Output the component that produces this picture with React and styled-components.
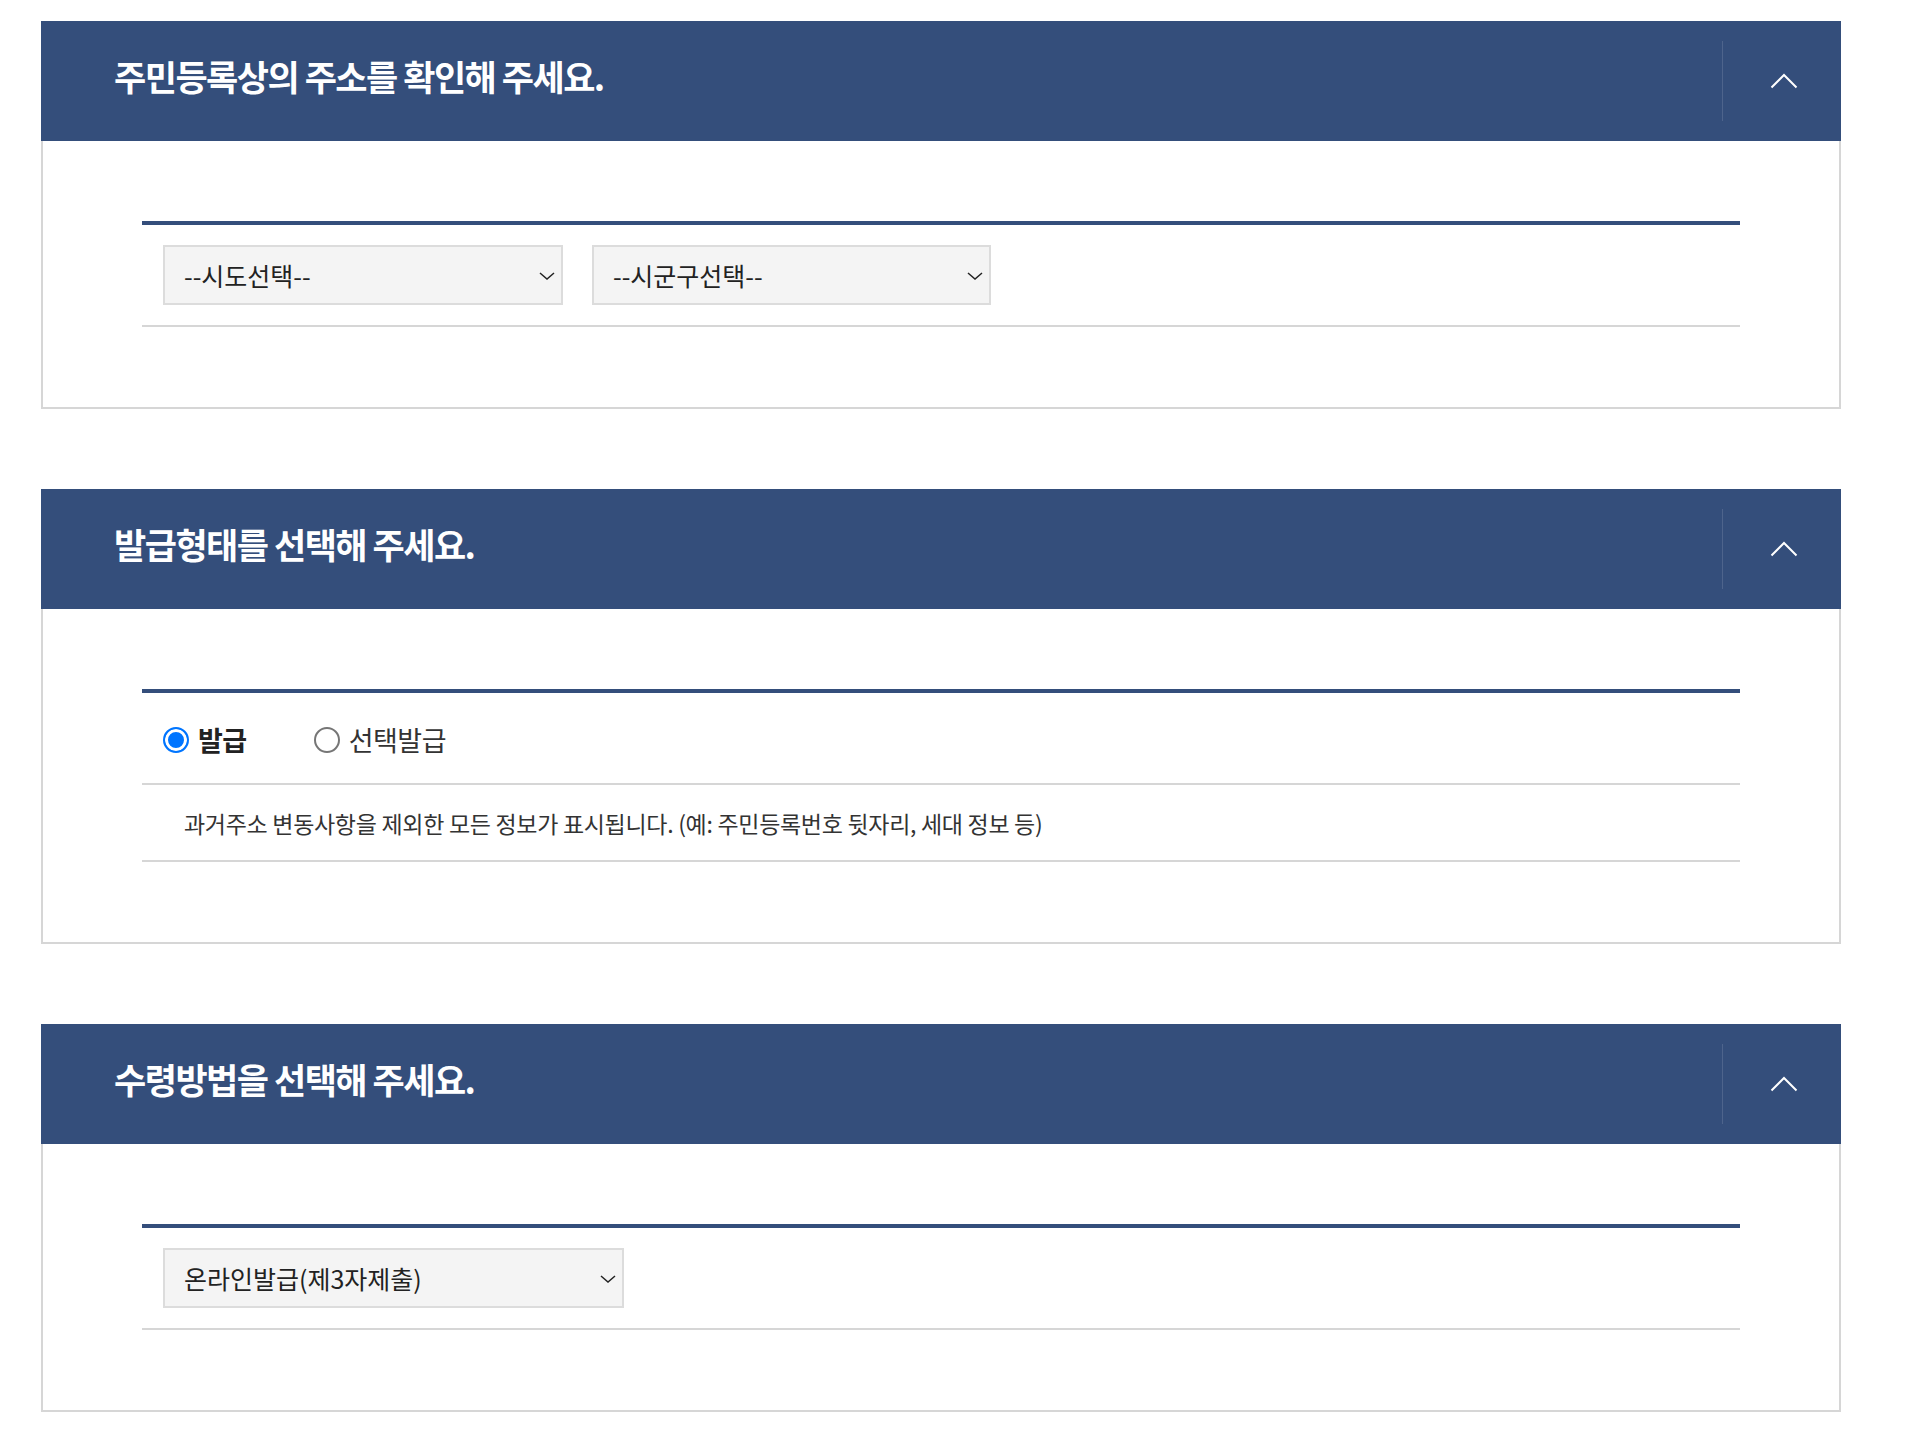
import React, { useState } from 'react';
import styled, { createGlobalStyle } from 'styled-components';

const GlobalStyle = createGlobalStyle`
  * { box-sizing: border-box; }
  body {
    margin: 0;
    background: #fff;
    font-family: "Noto Sans CJK KR", "Noto Sans", sans-serif;
    color: #222;
  }
`;

const Page = styled.div`
  width: 1841px;
  padding: 21px 0 38px 41px;
`;

const Panel = styled.section`
  width: 1800px;
  margin-bottom: 80px;
  &:last-child { margin-bottom: 0; }
`;

const Header = styled.div`
  height: 120px;
  background: #344e7b;
  display: flex;
  align-items: center;
  padding-left: 73px;
`;

const Title = styled.h2`
  flex: 1;
  margin: 0 0 12px;
  color: #fff;
  font-size: 35px;
  font-weight: 700;
  letter-spacing: -1.5px;
`;

const Toggle = styled.button`
  width: 119px;
  height: 80px;
  border: 0;
  border-left: 1px solid rgba(255, 255, 255, 0.13);
  background: transparent;
  display: flex;
  align-items: center;
  justify-content: center;
  padding: 0 0 0 4px;
  cursor: pointer;
`;

const Body = styled.div`
  border: 2px solid #d6d6d6;
  border-top: 0;
  padding: 80px 99px 80px;
`;

const Table = styled.div`
  border-top: 4px solid #344e7b;
`;

const Row = styled.div`
  display: flex;
  align-items: center;
  gap: 29px;
  padding: ${p => p.$pad || '20px 21px'};
  min-height: ${p => p.$h || 'auto'};
  border-bottom: 2px solid #d6d6d6;
`;

const SelectWrap = styled.div`
  position: relative;
  width: ${p => p.$w}px;
`;

const Select = styled.select`
  appearance: none;
  width: 100%;
  height: 60px;
  background: #f4f4f4;
  border: 2px solid #dcdcdc;
  border-radius: 0;
  padding: 0 40px 0 19px;
  font-family: "Noto Sans CJK KR", "Noto Sans", sans-serif;
  font-size: 25px;
  color: #222;
  outline: none;
`;

const Arrow = styled.svg`
  position: absolute;
  right: 8px;
  top: 27px;
  pointer-events: none;
`;

const RadioLabel = styled.label`
  display: flex;
  align-items: center;
  gap: 9px;
  font-size: 27px;
  letter-spacing: -0.5px;
  font-weight: ${p => (p.$on ? 700 : 400)};
  color: ${p => (p.$on ? '#222' : '#333')};
  margin-right: ${p => p.$mr || 0}px;
  cursor: pointer;
`;

const Radio = styled.input`
  appearance: none;
  margin: 0;
  width: 26px;
  height: 26px;
  border-radius: 50%;
  border: 2px solid #767676;
  background: #fff;
  &:checked {
    border: 2px solid #0075ff;
    background: #0075ff;
    box-shadow: inset 0 0 0 3px #fff;
  }
`;

const Desc = styled.p`
  margin: 0;
  font-size: 23px;
  letter-spacing: -0.3px;
  color: #333;
`;

const Chevron = () => (
  <svg width="28" height="16" viewBox="0 0 28 16">
    <polyline points="1.5,14.5 14,2 26.5,14.5" fill="none" stroke="#fff" strokeWidth="2" />
  </svg>
);

const Dropdown = ({ w, children }) => (
  <SelectWrap $w={w}>
    <Select>{children}</Select>
    <Arrow width="16" height="8" viewBox="0 0 16 8">
      <polyline points="1,1 8,7 15,1" fill="none" stroke="#222" strokeWidth="1.5" />
    </Arrow>
  </SelectWrap>
);

const Section = ({ title, children }) => (
  <Panel>
    <Header>
      <Title>{title}</Title>
      <Toggle aria-label="접기"><Chevron /></Toggle>
    </Header>
    <Body>
      <Table>{children}</Table>
    </Body>
  </Panel>
);

export default function App() {
  const [type, setType] = useState('all');
  return (
    <Page>
      <GlobalStyle />
      <Section title="주민등록상의 주소를 확인해 주세요.">
        <Row>
          <Dropdown w={400}><option>--시도선택--</option></Dropdown>
          <Dropdown w={399}><option>--시군구선택--</option></Dropdown>
        </Row>
      </Section>
      <Section title="발급형태를 선택해 주세요.">
        <Row $pad="3px 21px 0" $h="92px">
          <RadioLabel $on={type === 'all'} $mr={38}>
            <Radio type="radio" name="type" checked={type === 'all'} onChange={() => setType('all')} />
            발급
          </RadioLabel>
          <RadioLabel $on={type === 'part'}>
            <Radio type="radio" name="type" checked={type === 'part'} onChange={() => setType('part')} />
            선택발급
          </RadioLabel>
        </Row>
        <Row $pad="0 42px" $h="77px">
          <Desc>과거주소 변동사항을 제외한 모든 정보가 표시됩니다. (예: 주민등록번호 뒷자리, 세대 정보 등)</Desc>
        </Row>
      </Section>
      <Section title="수령방법을 선택해 주세요.">
        <Row>
          <Dropdown w={461}><option>온라인발급(제3자제출)</option></Dropdown>
        </Row>
      </Section>
    </Page>
  );
}
